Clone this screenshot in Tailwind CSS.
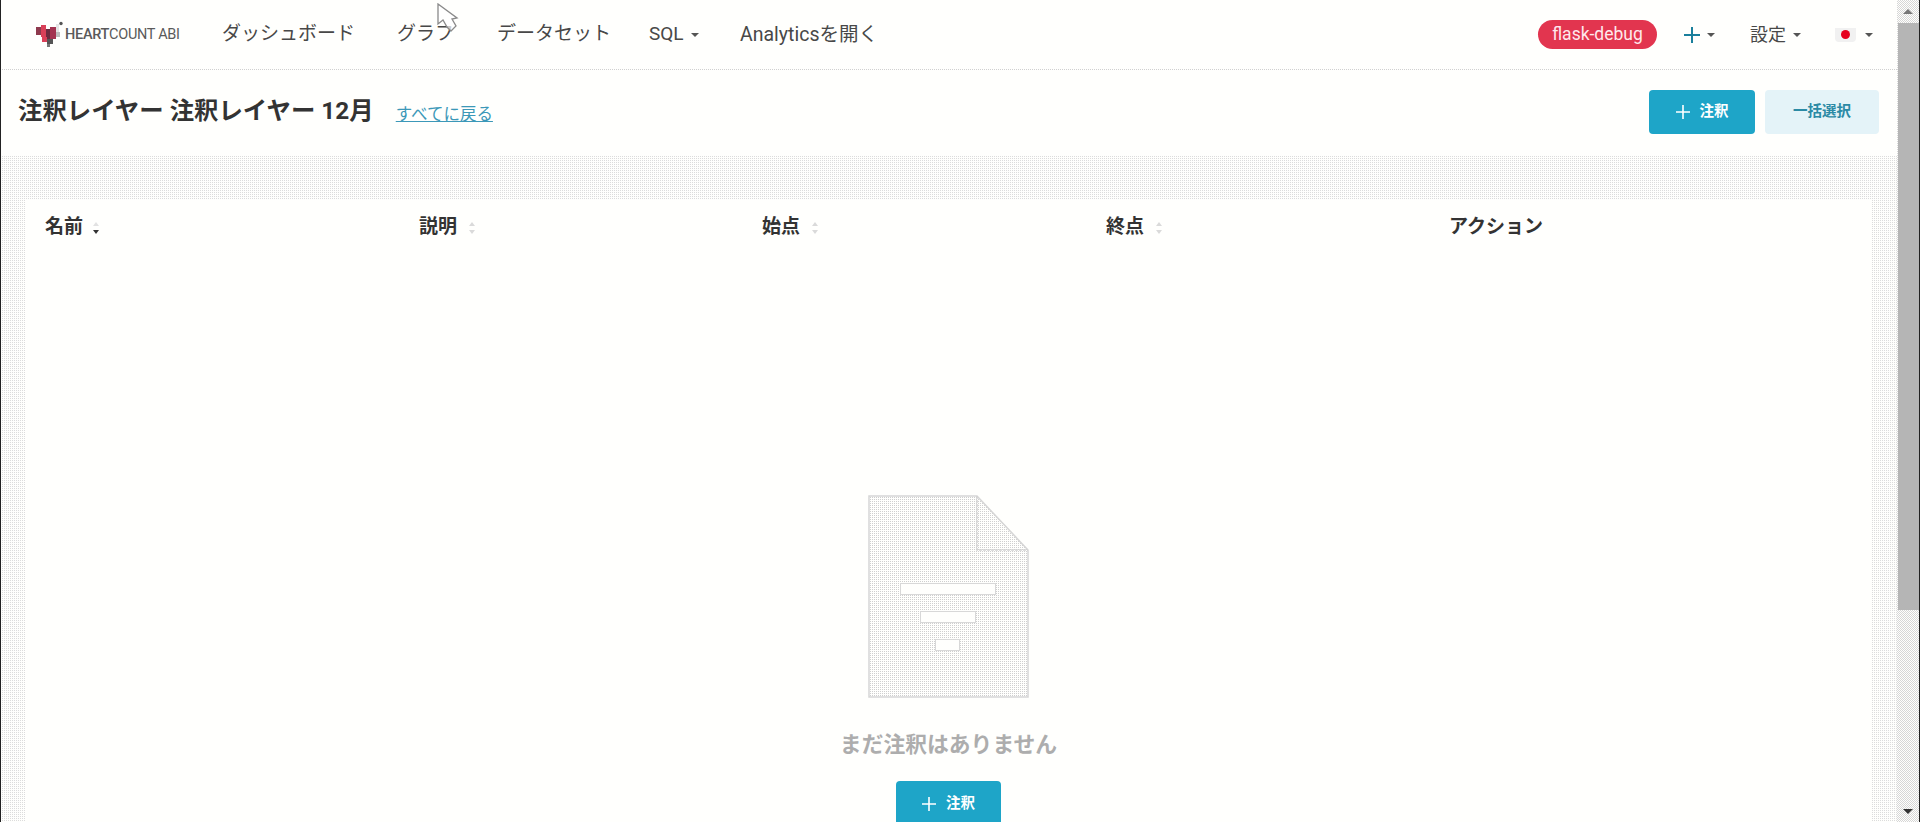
<!DOCTYPE html>
<html lang="ja">
<head>
<meta charset="utf-8">
<title>注釈レイヤー</title>
<script src="https://cdn.jsdelivr.net/npm/@tailwindcss/browser@4"></script>
</head>
<body class="m-0 h-[822px] overflow-hidden bg-white font-['Roboto','Noto_Sans_CJK_JP',sans-serif] text-[#323232]">
<div class="relative flex h-[822px] w-[1920px] overflow-hidden border-x border-[#222]">
  <div class="flex w-[1896px] flex-col bg-[#fffffd]">
    <header class="flex h-[69px] shrink-0 items-center text-[#484848]">
      <div class="ml-[35px] flex w-[186px] items-center">
        <svg width="28" height="28" viewBox="0 0 28 28" class="shrink-0">
          <rect x="0" y="6" width="5" height="8" fill="#8e3a4e"/><rect x="5" y="4" width="5" height="12" fill="#d94058"/><rect x="10" y="8" width="4" height="10" fill="#6c2b3f"/><rect x="14" y="6" width="6" height="12" fill="#a33350"/><rect x="20" y="3" width="3" height="8" fill="#e5e5e5"/><rect x="20" y="11" width="4" height="5" fill="#bbb"/><rect x="6" y="16" width="5" height="5" fill="#d94058"/><rect x="11" y="18" width="6" height="5" fill="#555"/><rect x="11" y="23" width="3" height="3" fill="#777"/><circle cx="25" cy="2.5" r="1.7" fill="#555"/>
        </svg>
        <span class="ml-[1px] whitespace-nowrap text-[14.5px] tracking-[-0.3px] text-[#5a5a5a]"><b class="font-medium">HEART</b>COUNT ABI</span>
      </div>
      <nav class="flex items-center whitespace-nowrap text-[19px]">
        <a class="w-[175px]">ダッシュボード</a>
        <a class="w-[100px]">グラフ</a>
        <a class="w-[152px]">データセット</a>
        <a class="flex w-[91px] items-center">SQL<i class="ml-[7px] border-x-[4px] border-t-[4px] border-x-transparent border-t-[#555]"></i></a>
        <a class="text-[19.5px]">Analyticsを開く</a>
      </nav>
      <div class="ml-auto flex items-center whitespace-nowrap">
        <span class="flex h-[29px] w-[119px] items-center justify-center rounded-full bg-[#e2354f] text-[17.5px] text-[#ffe8ec]">flask-debug</span>
        <svg width="16" height="16" viewBox="0 0 16 16" class="ml-[27px]"><path d="M8 0v16M0 8h16" stroke="#1a7f9c" stroke-width="2"/></svg>
        <i class="ml-[7px] border-x-[4px] border-t-[4px] border-x-transparent border-t-[#555]"></i>
        <span class="ml-[35px] text-[18px]">設定</span>
        <i class="ml-[7px] border-x-[4px] border-t-[4px] border-x-transparent border-t-[#555]"></i>
        <span class="ml-[34px] flex h-[14px] w-[21px] items-center justify-center rounded-b-[4px] bg-[#f1f1f1]"><span class="h-[9px] w-[9px] rounded-full bg-[#e6001e]"></span></span>
        <i class="ml-[9px] mr-[24px] border-x-[4px] border-t-[4px] border-x-transparent border-t-[#555]"></i>
      </div>
    </header>
    <div class="h-[2px] shrink-0 bg-[repeating-conic-gradient(#d0d0d0_0_25%,#fffffd_0_100%)] bg-[length:2px_2px]"></div>
    <section class="flex h-[85px] shrink-0 items-center pr-[18px] pb-[3px] pl-[17px]">
      <h1 class="mb-[2px] text-[24.4px] leading-none font-bold whitespace-nowrap text-[#333]">注釈レイヤー 注釈レイヤー 12月</h1>
      <a class="mt-[7px] ml-[22px] text-[16.5px] text-[#3c98b8] underline">すべてに戻る</a>
      <button class="ml-auto flex h-[44px] w-[106px] items-center justify-center gap-[10px] rounded-[4px] bg-[#1ea5c8] text-[14.5px] font-bold text-white">
        <svg width="14" height="14" viewBox="0 0 14 14"><path d="M7 0v14M0 7h14" stroke="#fff" stroke-width="1.6"/></svg>注釈
      </button>
      <button class="ml-[10px] h-[44px] w-[114px] rounded-[4px] bg-[#e4f3f8] text-[14.5px] font-bold text-[#2b8aa5]">一括選択</button>
    </section>
    <main class="min-h-0 flex-1 overflow-hidden bg-[repeating-conic-gradient(#dcdcdc_0_25%,#fffffd_0_100%)] bg-[length:2px_2px] pt-[44px] pr-[25px] pl-[24px]">
      <div class="flex h-[700px] flex-col overflow-hidden bg-[#fffffd]">
        <div class="grid h-[56px] shrink-0 grid-cols-[374px_343px_344px_343px_1fr] items-center pb-[1px] pl-[20px] text-[19px] font-bold text-[#333]">
          <div class="flex items-center">名前
            <svg width="8" height="14" viewBox="0 0 8 14" class="ml-[9px]"><path d="M4 1L7 5H1z" fill="#e2e2e2"/><path d="M4 13L7 9H1z" fill="#333"/></svg>
          </div>
          <div class="flex items-center">説明
            <svg width="8" height="14" viewBox="0 0 8 14" class="ml-[11px]"><path d="M4 1L7 5H1zM4 13L7 9H1z" fill="#dadada"/></svg>
          </div>
          <div class="flex items-center">始点
            <svg width="8" height="14" viewBox="0 0 8 14" class="ml-[11px]"><path d="M4 1L7 5H1zM4 13L7 9H1z" fill="#dadada"/></svg>
          </div>
          <div class="flex items-center">終点
            <svg width="8" height="14" viewBox="0 0 8 14" class="ml-[11px]"><path d="M4 1L7 5H1zM4 13L7 9H1z" fill="#dadada"/></svg>
          </div>
          <div>アクション</div>
        </div>
        <div class="flex flex-col items-center pt-[239px]">
          <svg width="161" height="203" viewBox="0 0 161 203">
            <defs><pattern id="dots" width="2" height="2" patternUnits="userSpaceOnUse"><rect width="2" height="2" fill="#fffffd"/><rect width="1" height="1" fill="#cfcfcf"/></pattern></defs>
            <path d="M1 1H109L160 55V202H1Z" fill="url(#dots)" stroke="#d6d6d6" stroke-width="1.500"/>
            <path d="M109 1V55H160" fill="none" stroke="#d2d2d2" stroke-width="1.500" stroke-dasharray="3 1"/>
            <rect x="32.500" y="88.500" width="95" height="11" fill="#fffffd" stroke="#d8d8d8"/>
            <rect x="52.500" y="116.500" width="55" height="11" fill="#fffffd" stroke="#d8d8d8"/>
            <rect x="67.500" y="144.500" width="24" height="11" fill="#fffffd" stroke="#d8d8d8"/>
          </svg>
          <p class="mt-[33px] text-[21.8px] leading-[28px] font-bold whitespace-nowrap text-[#adadad]">まだ注釈はありません</p>
          <button class="mt-[22px] flex h-[45px] w-[105px] items-center justify-center gap-[10px] rounded-[4px] bg-[#1ea5c8] text-[14.5px] font-bold text-white">
            <svg width="14" height="14" viewBox="0 0 14 14"><path d="M7 0v14M0 7h14" stroke="#fff" stroke-width="1.6"/></svg>注釈
          </button>
        </div>
      </div>
    </main>
  </div>
  <aside class="flex w-[22px] flex-col items-center bg-[repeating-conic-gradient(#d6d6d6_0_25%,#fffffd_0_50%)] bg-[length:2px_2px]">
    <i class="mt-[9px] border-x-[5px] border-b-[5px] border-x-transparent border-b-[#777]"></i>
    <div class="mt-[9px] h-[587px] w-[21px] bg-[#b5b5b5]"></div>
    <i class="mt-auto mb-[8px] border-x-[5px] border-t-[5px] border-x-transparent border-t-[#333]"></i>
  </aside>
  <svg width="22" height="32" viewBox="0 0 22 32" class="absolute top-[3px] left-[436px]">
    <path d="M1 1L1 21L6 17L10 24L14 28L19 23L15 16L20 15Z" fill="#fff" fill-opacity="0.7" stroke="#8a8a8a" stroke-width="1.3"/>
  </svg>
</div>
</body>
</html>
